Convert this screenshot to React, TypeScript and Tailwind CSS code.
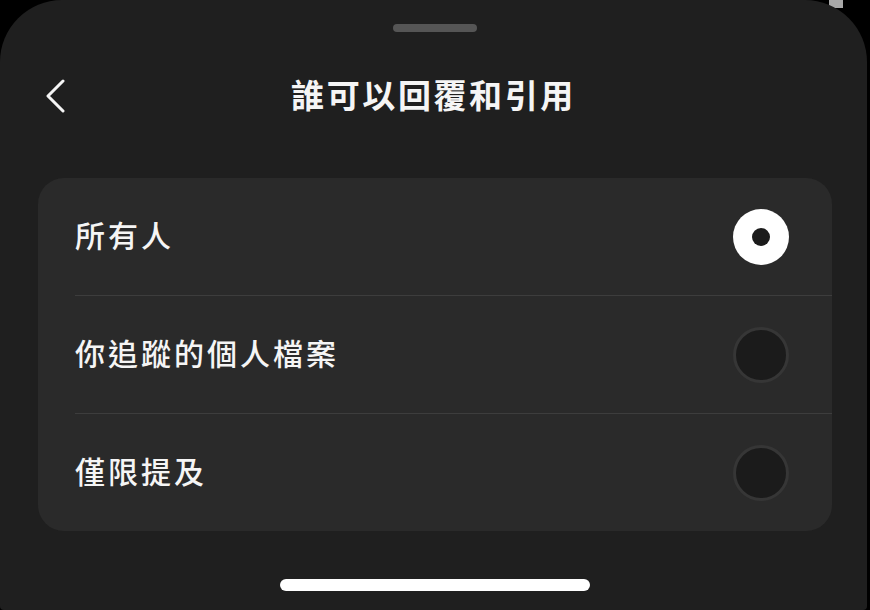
import React from "react";

const options = [
  { label: "所有人", selected: true },
  { label: "你追蹤的個人檔案", selected: false },
  { label: "僅限提及", selected: false },
];

function Radio({ selected }: { selected: boolean }) {
  if (selected) {
    return (
      <div className="w-[56px] h-[56px] rounded-full bg-white flex items-center justify-center">
        <div className="w-[18px] h-[18px] rounded-full bg-[#1b1b1b]" />
      </div>
    );
  }
  return <div className="w-[56px] h-[56px] rounded-full bg-[#1b1b1b] border-[3px] border-[#363636]" />;
}

export default function App() {
  return (
    <div className="relative w-[870px] h-[610px] bg-black overflow-hidden font-['Noto_Sans_CJK_TC','Noto_Sans',sans-serif]">
      <div className="absolute top-0 right-[27px] w-[14px] h-[8px] bg-[#a9a9a9]" />
      <div className="relative w-[867px] h-[610px] rounded-t-[62px] rounded-b-[4px] bg-[#1f1f1f] flex flex-col">
        <div className="h-[56px] pt-[24px]">
          <div className="ml-[393px] w-[84px] h-[8px] rounded-full bg-[#555555]" />
        </div>
        <div className="h-[80px] grid grid-cols-[1fr_auto_1fr] items-center">
          <div className="pl-[44px] flex items-center">
            <svg width="22" height="34" viewBox="0 0 22 34" fill="none">
              <path d="M19 2 L4 17 L19 32" stroke="#f5f5f5" strokeWidth="3" strokeLinecap="round" strokeLinejoin="round" />
            </svg>
          </div>
          <h1 className="text-[33px] leading-none font-semibold tracking-[2.6px] text-[#f5f5f5] pb-[4px]">誰可以回覆和引用</h1>
          <div />
        </div>
        <div className="mt-[42px] ml-[38px] w-[794px] rounded-[26px] bg-[#2a2a2a] flex flex-col">
          {options.map((o, i) => (
            <div
              key={o.label}
              className={
                i < options.length - 1
                  ? "ml-[37px] h-[118px] pr-[43px] flex items-center justify-between border-b border-[#3d3d3d]"
                  : "ml-[37px] h-[117px] pr-[43px] flex items-center justify-between"
              }
            >
              <span className="text-[30px] leading-none font-medium tracking-[3px] text-[#f5f5f5] pb-[6px]">{o.label}</span>
              <Radio selected={o.selected} />
            </div>
          ))}
        </div>
        <div className="mt-[48px] ml-[280px] w-[310px] h-[12px] rounded-full bg-white" />
      </div>
    </div>
  );
}
